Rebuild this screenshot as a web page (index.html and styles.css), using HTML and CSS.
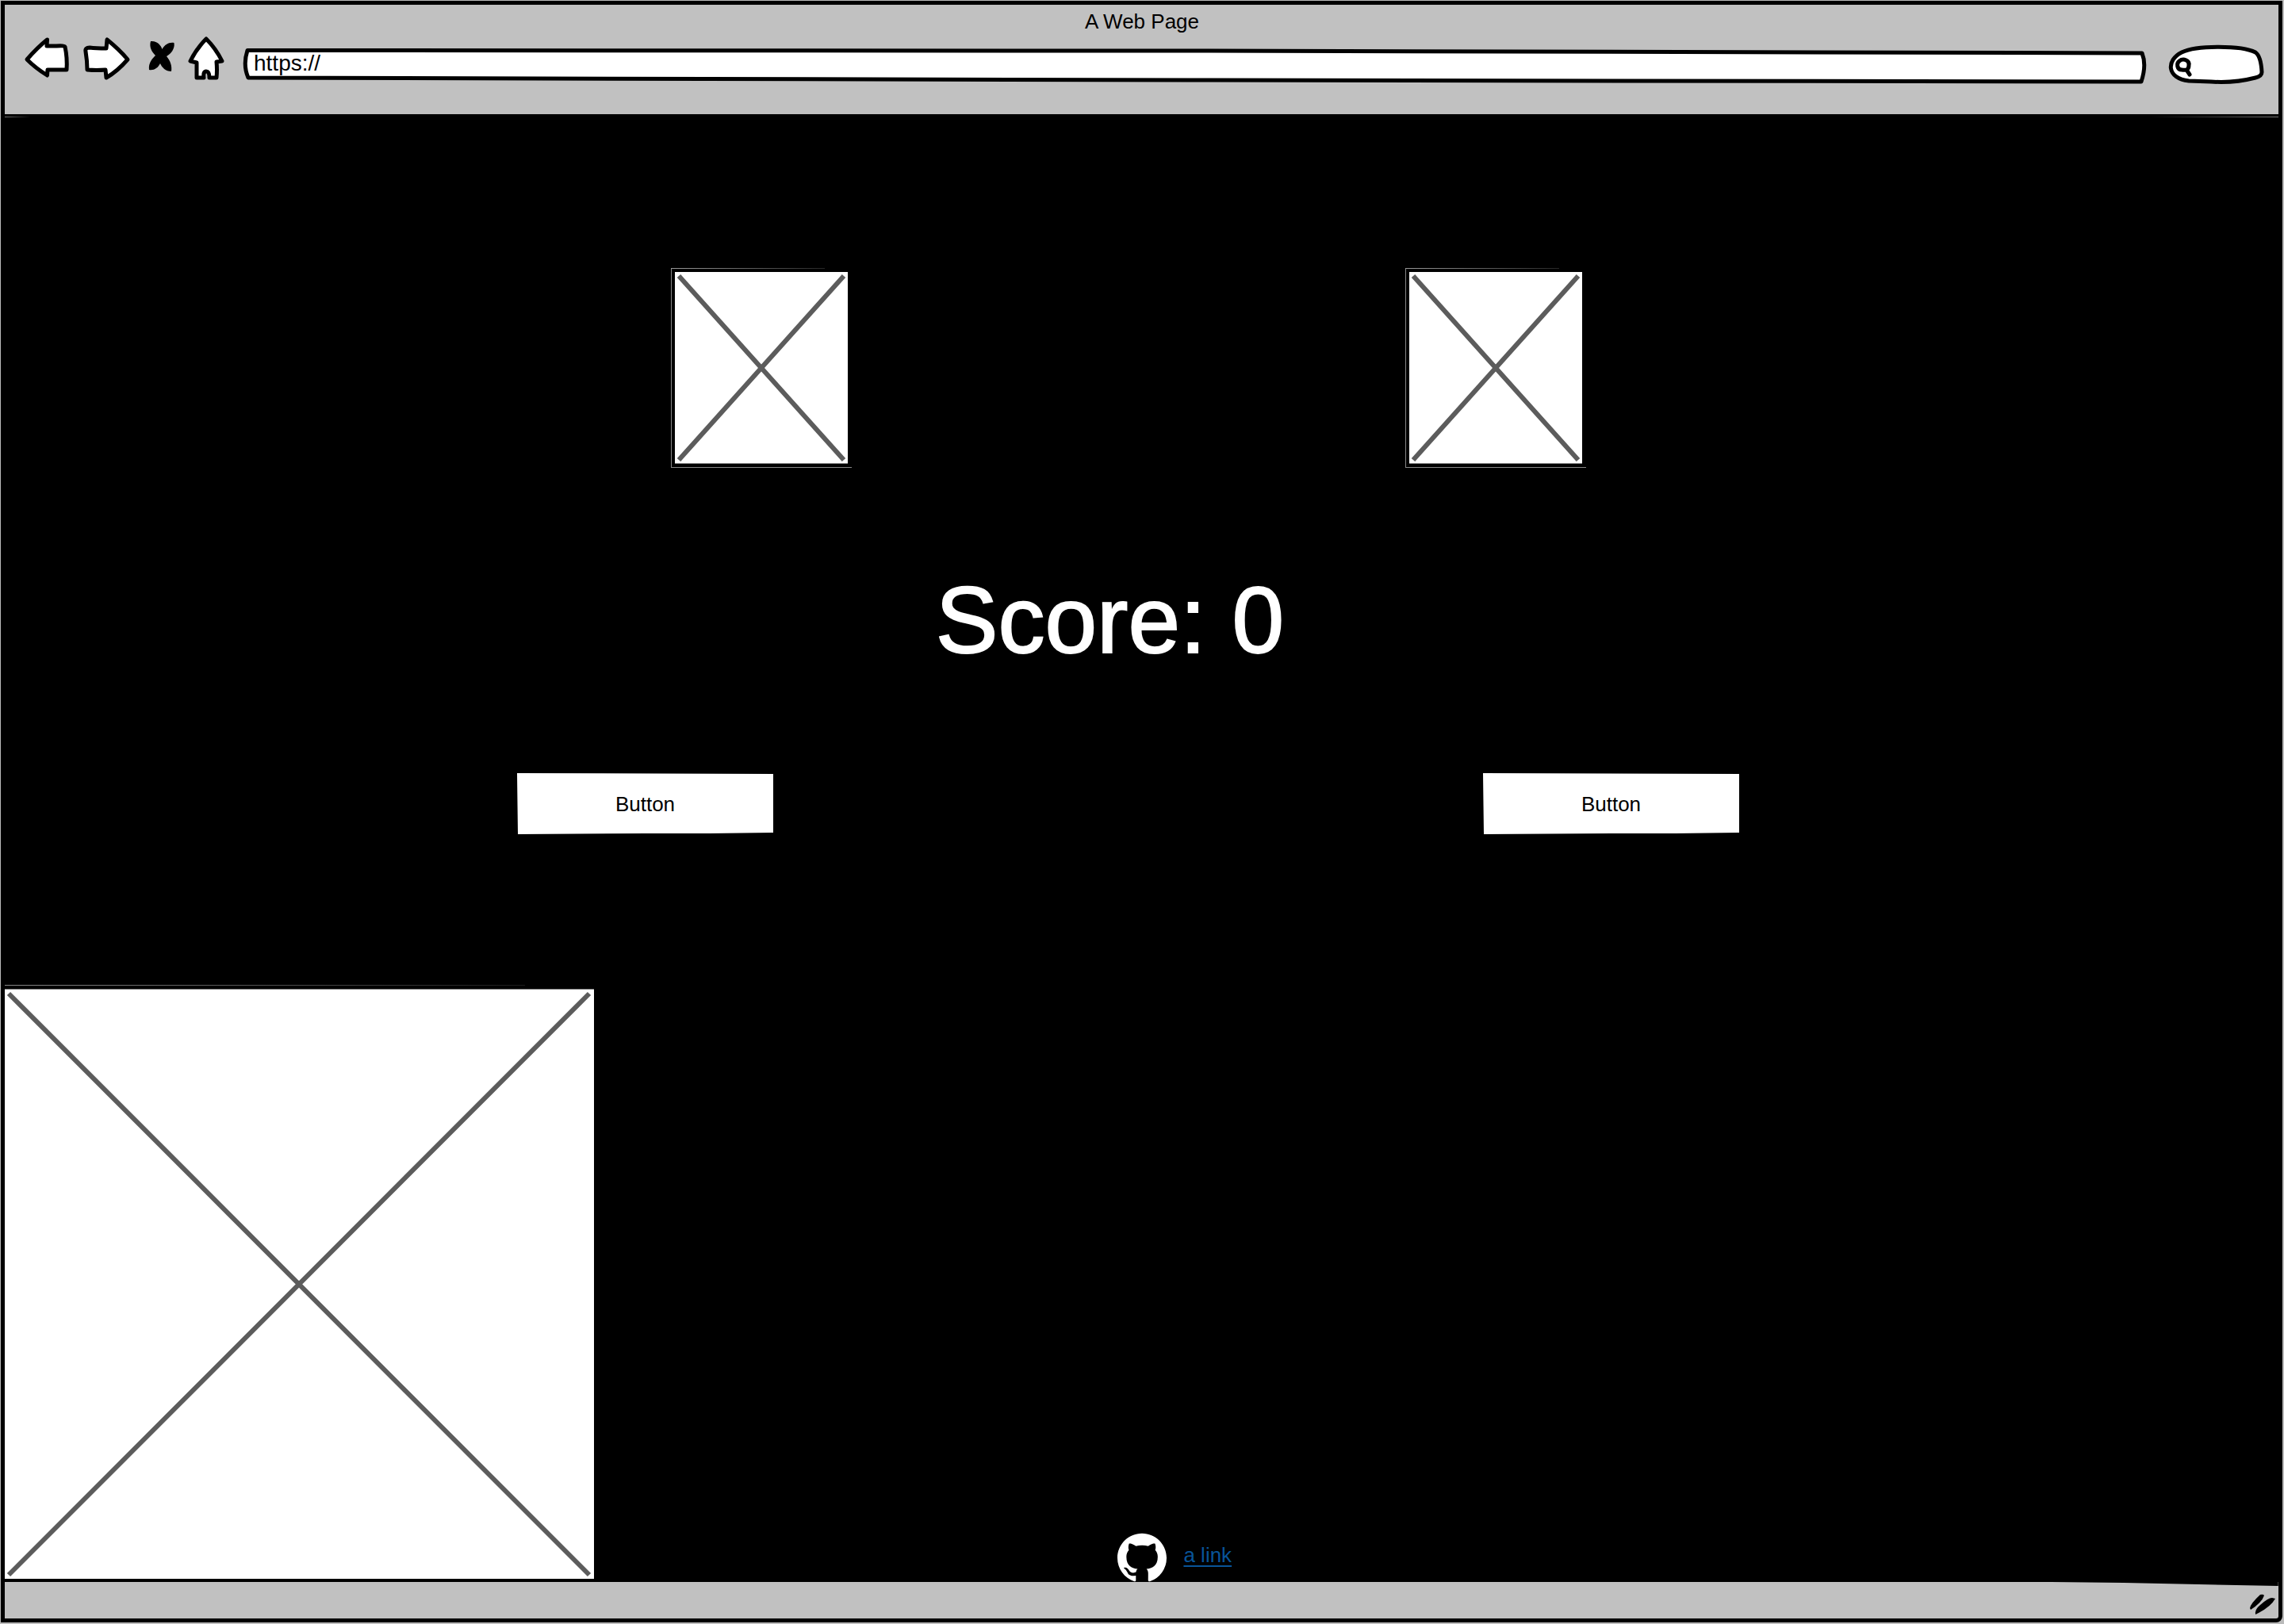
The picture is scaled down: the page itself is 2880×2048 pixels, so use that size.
FILE: index.html
```html
<!DOCTYPE html>
<html lang="en">
<head>
<meta charset="utf-8">
<title>A Web Page</title>
<link rel="stylesheet" href="styles.css">
</head>
<body>
<div class="window">
  <header class="chrome">
    <h1 class="chrome-title">A Web Page</h1>
    <div class="toolbar">
      <button class="tool" type="button" aria-label="Back">
        <svg class="sketch" width="60" height="64" viewBox="30 44 60 64"><path d="M59.500 50 Q47 60 34 75 Q45 86 59.500 95 L60 88 Q72 88 84 88 Q85 73 82 59 Q81 57 71 58 L59 58 Z"/></svg>
      </button>
      <button class="tool" type="button" aria-label="Forward">
        <svg class="sketch" width="64" height="64" viewBox="102 44 64 64"><path d="M135 50 L134 61 Q121 61 113 60 Q107 60 108 65 Q110 77 110 88 Q122 89 133 88 L134 98 Q148 90 161 75 Q150 62 135 50 Z"/></svg>
      </button>
      <button class="tool" type="button" aria-label="Stop">
        <svg width="44" height="64" viewBox="178 44 44 64"><path d="M190 52 C198 51 203 57 204.500 62 C208 56 213 53 219.500 54 C221 62 215 68 210 71 C215 77 217 83 216 90 C209 90 204 85 202 80 C199 86 194 89 188 88 C187 79 192 74 196 70 C191 65 188 59 190 52 Z"/></svg>
      </button>
      <button class="tool" type="button" aria-label="Home">
        <svg class="sketch" width="52" height="64" viewBox="234 44 52 64"><path d="M260 49 Q248 61 240 77 L248 79 L248 98 L257 98 Q256 90 260 90 Q264 90 264 98 L273 98 Q274 88 273 78 L280 77 Q272 61 260 49 Z"/></svg>
      </button>
      <div class="field address">
        <svg class="sketch field-shape" viewBox="306 44 2402 64" preserveAspectRatio="none"><path d="M312 63.500 L1500 64 L2701 67 Q2707 82 2700 103 L1500 101 L313 98 Q306 82 312 63.500 Z"/></svg>
        <input class="address-input" type="text" aria-label="Address" value="https://">
      </div>
      <div class="field search">
        <svg class="sketch field-shape" viewBox="2734 44 124 64" preserveAspectRatio="none"><path d="M2760 102 C2732 99 2731 76 2751 66 C2770 57 2826 57 2844 66 Q2851 71 2852 91 Q2852 96 2844 98 Q2817 105 2788 103 Z"/><path class="lens" d="M2748 77 C2753 73 2761 76 2760 82 C2760 88 2757 89 2751 88 C2745 88 2744 80 2748 77 M2757 88 L2761 94"/></svg>
        <input class="search-input" type="search" aria-label="Search">
      </div>
    </div>
  </header>

  <main class="page">
    <svg class="defs" width="0" height="0" aria-hidden="true">
      <linearGradient id="fade" gradientUnits="userSpaceOnUse" x1="0" y1="0" x2="200" y2="0"><stop stop-color="#999"/><stop offset="1" stop-color="#222"/></linearGradient>
      <linearGradient id="fade-wide" gradientUnits="userSpaceOnUse" x1="0" y1="0" x2="660" y2="0"><stop stop-color="#888"/><stop offset="1" stop-color="#1a1a1a"/></linearGradient>
    </svg>
    <div class="row images">
      <svg class="thumb" viewBox="0 0 229 252" role="img" aria-label="Image">
        <path class="edge" d="M.5 252 V0 M0 251.500 H228"/>
        <path d="M0 0 H194 V1 H0 Z" fill="url(#fade)"/>
        <path class="sheet" d="M5 5 H223 V246.500 H5 Z"/>
        <path class="cross" d="M10 10 L218 242 M218 10 L10 242"/>
      </svg>
      <svg class="thumb" viewBox="0 0 229 252" role="img" aria-label="Image">
        <path class="edge" d="M.5 252 V0 M0 251.500 H228"/>
        <path d="M0 0 H194 V1 H0 Z" fill="url(#fade)"/>
        <path class="sheet" d="M5 5 H223 V246.500 H5 Z"/>
        <path class="cross" d="M10 10 L218 242 M218 10 L10 242"/>
      </svg>
    </div>
    <p class="score">Score: 0</p>
    <div class="row actions">
      <button class="action" type="button">Button</button>
      <button class="action" type="button">Button</button>
    </div>
    <div class="row bottom">
      <svg class="picture" viewBox="0 0 744 753" role="img" aria-label="Image">
        <path d="M0 0 H656 V1 H0 Z" fill="url(#fade-wide)"/>
        <path class="sheet" d="M0 5.500 H743 V749 H0 Z"/>
        <path class="cross" d="M5 11 L737 744 M737 11 L5 744"/>
      </svg>
      <div class="credit">
        <svg class="mark" viewBox="0 0 16 15.600" role="img" aria-label="GitHub"><path d="M8 0C3.580 0 0 3.580 0 8c0 3.540 2.290 6.530 5.470 7.590.4.070.55-.17.55-.38 0-.19-.01-.82-.01-1.490-2.010.37-2.530-.49-2.690-.94-.09-.23-.48-.94-.82-1.130-.28-.15-.68-.52-.01-.53.63-.01 1.080.58 1.230.82.72 1.210 1.870.87 2.330.66.07-.52.28-.87.51-1.070-1.780-.2-3.640-.89-3.640-3.950 0-.87.31-1.590.82-2.150-.08-.2-.36-1.020.08-2.120 0 0 .67-.21 2.200.82.64-.18 1.320-.27 2-.27s1.360.09 2 .27c1.530-1.040 2.200-.82 2.200-.82.44 1.100.16 1.920.08 2.120.51.56.82 1.270.82 2.150 0 3.070-1.870 3.750-3.650 3.950.29.25.54.73.54 1.480 0 1.070-.01 1.930-.01 2.200 0 .21.15.46.55.38A8.010 8.010 0 0 0 16 8c0-4.420-3.580-8-8-8Z"/></svg>
        <a class="link" href="#">a link</a>
      </div>
    </div>
  </main>

  <footer class="status">
    <svg class="slope" viewBox="0 0 280 6" preserveAspectRatio="none"><path d="M0 0 H280 V5 L90 1 Z"/></svg>
    <svg class="grip" width="36" height="28" viewBox="2837 2009 36 28"><path d="M2837 2028 Q2838 2022 2850 2011 Q2854 2010 2855 2012 Q2852 2021 2838 2030 Z M2844 2035 Q2843 2030 2850 2024 Q2860 2015 2865 2015 L2869 2016 Q2863 2027 2844 2036 Z"/></svg>
  </footer>
</div>
</body>
</html>
```
FILE: styles.css
```css
* {
  box-sizing: border-box;
}

body {
  margin: 0;
  padding: 1px 2px 2px 1px;
  min-height: 100vh;
  display: flex;
  background: #bbb;
  color: #000;
  font: 26px/32px "Liberation Sans", Arial, sans-serif;
}

svg {
  display: block;
}

.defs {
  position: absolute;
}

.window {
  flex: 1;
  display: flex;
  flex-direction: column;
  border: 5px solid #000;
  border-radius: 0 0 8px 0;
  background: #000;
}

/* Browser bar */
.chrome {
  height: 138px;
  padding: 4px 15px 0 24px;
  background: #c1c1c1;
}

.chrome-title {
  margin: 0;
  padding-right: 8px;
  text-align: center;
  font-size: 26px;
  font-weight: 400;
  line-height: 34px;
}

.toolbar {
  display: flex;
  gap: 12px;
}

.tool {
  padding: 0;
  border: 0;
  background: none;
}

.sketch path {
  fill: #fff;
  stroke: #000;
  stroke-width: 5px;
  stroke-linejoin: round;
  stroke-linecap: round;
}

.sketch .lens {
  fill: none;
}

.field {
  position: relative;
  height: 64px;
}

.field-shape {
  position: absolute;
  inset: 0;
  width: 100%;
  height: 100%;
}

.address {
  flex: 1;
  margin-left: 8px;
}

.search {
  width: 124px;
  margin-left: 14px;
}

.address-input,
.search-input {
  position: relative;
  width: 100%;
  height: 64px;
  border: 0;
  outline: 0;
  background: none;
  color: #000;
  font: inherit;
}

.address-input {
  padding: 12px 16px 4px 14px;
  font-size: 28px;
}

.search-input {
  padding: 4px 12px 0 32px;
  appearance: none;
}

/* Page */
.page {
  flex: 1;
  display: flex;
  flex-direction: column;
  padding-top: 194px;
  background:
    linear-gradient(to right, #000, #777) right 3px / 162px 1px no-repeat,
    linear-gradient(to left, #000, #777) left 3px / 32px 1px no-repeat,
    #000;
}

.row {
  display: grid;
}

.images {
  grid-template-columns: 840fr 229px 697fr 229px 872fr;
}

.thumb {
  width: 229px;
  height: 252px;
}

.thumb:first-child,
.action:first-child {
  grid-column: 2;
}

.thumb:last-child,
.action:last-child {
  grid-column: 4;
}

.edge {
  fill: none;
  stroke: #888;
}

.sheet {
  fill: #fff;
}

.cross {
  fill: none;
  stroke: #5c5c5c;
  stroke-width: 6px;
}

.score {
  margin: 132px 0;
  padding-right: 80px;
  color: #fff;
  font-size: 118px;
  line-height: 120px;
  text-align: center;
  -webkit-text-stroke: 2px #fff;
}

.actions {
  grid-template-columns: 646fr 323px 895fr 323px 680fr;
}

.action {
  height: 78px;
  padding: 2px 0 0;
  border: 0;
  background: #fff;
  color: #000;
  font: inherit;
  clip-path: polygon(0 1px, 100% 2px, 100% 76px, 75% 77px, 50% 77px, 1px 100%);
}

.bottom {
  grid-template-columns: 744px 659fr auto 1319fr;
  align-items: end;
  margin-top: auto;
}

.picture {
  width: 744px;
  height: 753px;
}

.credit {
  grid-column: 3;
  display: flex;
  gap: 21px;
}

.mark {
  width: 62px;
  height: 62px;
  fill: #fff;
}

.link {
  padding-top: 12px;
  color: #085499;
  text-decoration-thickness: 2px;
  text-underline-offset: 4px;
}

/* Status bar */
.status {
  display: flex;
  flex-direction: column;
  align-items: flex-end;
  gap: 8px;
  height: 46px;
  background: #c1c1c1;
  border-radius: 0 0 3px 0;
}

.slope {
  width: 10%;
  height: 6px;
}
```
